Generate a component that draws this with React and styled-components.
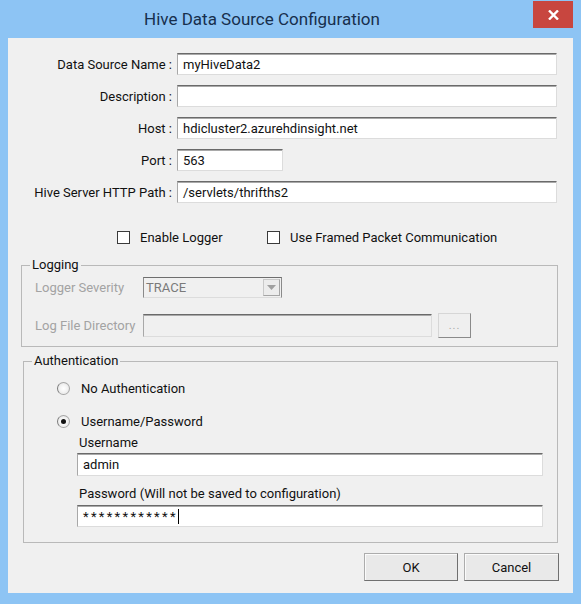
import React from 'react';
import styled, { createGlobalStyle } from 'styled-components';

const Global = createGlobalStyle`
  html, body { margin: 0; padding: 0; background: #8dc4f4; }
  body { width: 581px; height: 604px; overflow: hidden; font-family: Roboto, "Noto Sans", sans-serif; }
  * { box-sizing: border-box; }
`;

const Window = styled.div`
  width: 581px;
  height: 604px;
  background: #8dc4f4;
  display: flex;
  flex-direction: column;
  padding: 0 8px 11px 8px;
`;

const TitleBar = styled.div`
  height: 38px;
  display: grid;
  grid-template-columns: 1fr 40px;
  column-gap: 8px;
  align-items: start;
`;

const Title = styled.div`
  height: 38px;
  display: flex;
  align-items: center;
  justify-content: center;
  padding-right: 9px;
  font-size: 17px;
  color: #172f4d;
`;

const CloseButton = styled.div`
  margin-top: 1px;
  height: 27px;
  background: #c8463f;
  display: flex;
  align-items: center;
  justify-content: center;
`;

const Client = styled.div`
  flex: 1;
  background: #f0f0f0;
  display: flex;
  flex-direction: column;
  color: #111;
  font-size: 13px;
`;

const FormGrid = styled.div`
  display: grid;
  grid-template-columns: 164px 380px;
  column-gap: 5px;
  row-gap: 10px;
  padding-top: 15px;
`;

const FieldLabel = styled.div`
  height: 22px;
  display: flex;
  align-items: center;
  justify-content: flex-end;
  white-space: nowrap;
`;

const TextBox = styled.div`
  height: ${p => p.$h || 22}px;
  width: ${p => (p.$w ? `${p.$w}px` : '100%')};
  background: ${p => (p.$disabled ? '#f0f0f0' : '#fff')};
  border: 1px solid #dcdcdc;
  border-top-color: #6a6a6a;
  border-left-color: #a8a8a8;
  box-shadow: inset 0 1px 0 #a9a9a9;
  display: flex;
  align-items: center;
  padding-left: 5px;
  white-space: nowrap;
  overflow: hidden;
  color: #111;
`;

const Stars = styled.span`
  letter-spacing: 2.3px;
`;

const Caret = styled.span`
  display: inline-block;
  width: 1px;
  height: 15px;
  background: #000;
`;

const OptionsRow = styled.div`
  display: flex;
  align-items: center;
  margin-top: 28px;
  padding-left: 109px;
  height: 13px;
`;

const CheckItem = styled.label`
  display: flex;
  align-items: center;
  gap: 10px;
  width: ${p => (p.$w ? `${p.$w}px` : 'auto')};
  white-space: nowrap;
`;

const CheckBox = styled.span`
  width: 13px;
  height: 13px;
  flex: none;
  border: 1px solid #3a3a3a;
  background: #fff;
`;

const Group = styled.fieldset`
  margin: ${p => p.$mt}px 15px 0 ${p => p.$ml}px;
  border: 1px solid #b9b9b9;
  padding: ${p => p.$pad};
  min-width: 0;
`;

const Legend = styled.legend`
  padding: 0 2px;
  margin-left: 8px;
  line-height: 14px;
  font-size: 13px;
  color: #111;
`;

const LogGrid = styled.div`
  display: grid;
  grid-template-columns: 108px auto;
  row-gap: 15px;
  align-items: center;
  padding-left: 13px;
`;

const DisabledLabel = styled.div`
  color: #a3a3a3;
  white-space: nowrap;
`;

const Combo = styled.div`
  width: 139px;
  height: 21px;
  background: #f0f0f0;
  border: 1px solid #dcdcdc;
  border-top-color: #6e6e6e;
  border-left-color: #8a8a8a;
  border-right-color: #8a8a8a;
  display: flex;
  align-items: center;
  justify-content: space-between;
  padding: 0 1px 0 2px;
  color: #7a7a7a;
`;

const ComboArrow = styled.span`
  width: 17px;
  height: 17px;
  border: 1px solid #c9c9c9;
  border-bottom-color: #a5a5a5;
  border-right-color: #a5a5a5;
  background: #ececec;
  display: flex;
  align-items: center;
  justify-content: center;
`;

const DirRow = styled.div`
  display: flex;
  align-items: center;
  gap: 6px;
`;

const SmallButton = styled.div`
  width: 33px;
  height: 25px;
  background: #efefef;
  border: 1px solid #d6d6d6;
  border-right-color: #8a8a8a;
  border-bottom-color: #8a8a8a;
  display: flex;
  align-items: center;
  justify-content: center;
  color: #a8a8a8;
  font-size: 11px;
  letter-spacing: 1px;
`;

const AuthBody = styled.div`
  display: flex;
  flex-direction: column;
  padding-left: 33px;
`;

const RadioItem = styled.div`
  display: flex;
  align-items: center;
  gap: 11px;
  height: 13px;
  margin-top: ${p => p.$mt || 0}px;
`;

const Radio = styled.span`
  width: 13px;
  height: 13px;
  flex: none;
  border-radius: 50%;
  border: 1px solid #a6a6a6;
  border-left-color: #7a7a7a;
  background: radial-gradient(circle at 50% 50%, #ffffff 0, #f4f4f4 45%, #dedede 100%);
  display: flex;
  align-items: center;
  justify-content: center;
`;

const RadioDot = styled.span`
  width: 5px;
  height: 5px;
  border-radius: 50%;
  background: #111;
`;

const SubBlock = styled.div`
  display: flex;
  flex-direction: column;
  padding-left: 20px;
  padding-right: 14px;
`;

const SubLabel = styled.div`
  height: 15px;
  line-height: 15px;
  margin-top: ${p => p.$mt}px;
  margin-bottom: ${p => p.$mb}px;
  padding-left: 2px;
  white-space: nowrap;
`;

const ButtonRow = styled.div`
  display: flex;
  justify-content: flex-end;
  gap: 6px;
  margin-top: 10px;
  padding-right: 14px;
`;

const DialogButton = styled.div`
  width: ${p => p.$w}px;
  height: 28px;
  background: #e9e9e9;
  border: 1px solid #acacac;
  border-right-color: #707070;
  border-bottom-color: #707070;
  box-shadow: inset 1px 1px 0 #fbfbfb;
  display: flex;
  align-items: center;
  justify-content: center;
  color: #111;
`;

export default function App() {
  return (
    <>
      <Global />
      <Window>
        <TitleBar>
          <Title>Hive Data Source Configuration</Title>
          <CloseButton>
            <svg width="11" height="10" viewBox="0 0 11 10">
              <path d="M1 0.5 L10 9.5 M10 0.5 L1 9.5" stroke="#fff" strokeWidth="2.4" fill="none" />
            </svg>
          </CloseButton>
        </TitleBar>
        <Client>
          <FormGrid>
            <FieldLabel>Data Source Name :</FieldLabel>
            <TextBox>myHiveData2</TextBox>
            <FieldLabel>Description :</FieldLabel>
            <TextBox />
            <FieldLabel>Host :</FieldLabel>
            <TextBox>hdicluster2.azurehdinsight.net</TextBox>
            <FieldLabel>Port :</FieldLabel>
            <TextBox $w={106}>563</TextBox>
            <FieldLabel>Hive Server HTTP Path :</FieldLabel>
            <TextBox>/servlets/thrifths2</TextBox>
          </FormGrid>

          <OptionsRow>
            <CheckItem $w={150}>
              <CheckBox />
              Enable Logger
            </CheckItem>
            <CheckItem>
              <CheckBox />
              Use Framed Packet Communication
            </CheckItem>
          </OptionsRow>

          <Group $mt={14} $ml={13} $pad="5px 0 8px 0">
            <Legend>Logging</Legend>
            <LogGrid>
              <DisabledLabel>Logger Severity</DisabledLabel>
              <Combo>
                TRACE
                <ComboArrow>
                  <svg width="9" height="5" viewBox="0 0 9 5">
                    <path d="M0 0 H9 L4.5 5 Z" fill="#a0a0a0" />
                  </svg>
                </ComboArrow>
              </Combo>
              <DisabledLabel>Log File Directory</DisabledLabel>
              <DirRow>
                <TextBox $w={289} $h={23} $disabled />
                <SmallButton>...</SmallButton>
              </DirRow>
            </LogGrid>
          </Group>

          <Group $mt={7} $ml={15} $pad="14px 0 15px 0">
            <Legend>Authentication</Legend>
            <AuthBody>
              <RadioItem>
                <Radio />
                No Authentication
              </RadioItem>
              <RadioItem $mt={20}>
                <Radio>
                  <RadioDot />
                </Radio>
                Username/Password
              </RadioItem>
              <SubBlock>
                <SubLabel $mt={7} $mb={3}>Username</SubLabel>
                <TextBox $h={23}>admin</TextBox>
                <SubLabel $mt={10} $mb={4}>Password (Will not be saved to configuration)</SubLabel>
                <TextBox>
                  <Stars>************</Stars>
                  <Caret />
                </TextBox>
              </SubBlock>
            </AuthBody>
          </Group>

          <ButtonRow>
            <DialogButton $w={94}>OK</DialogButton>
            <DialogButton $w={95}>Cancel</DialogButton>
          </ButtonRow>
        </Client>
      </Window>
    </>
  );
}
